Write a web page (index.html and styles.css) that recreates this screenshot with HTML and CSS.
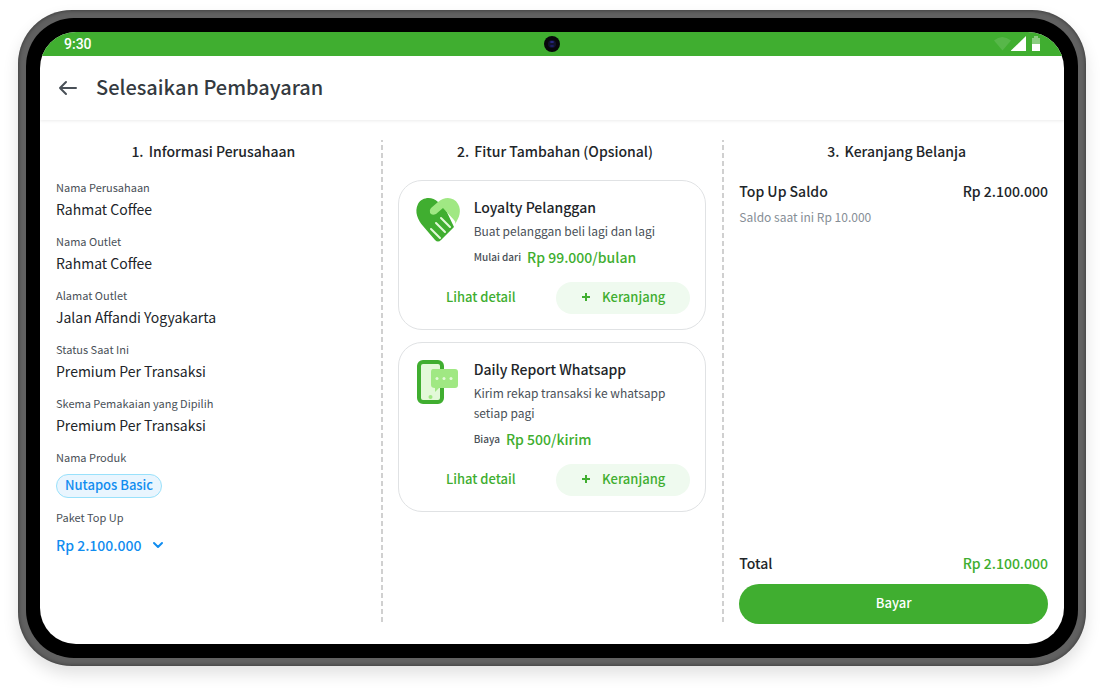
FILE: index.html
```html
<!DOCTYPE html>
<html lang="id">
<head>
    <meta charset="UTF-8">
    <meta name="viewport" content="width=device-width, initial-scale=1.0">
    <title>Selesaikan Pembayaran</title>
    <link rel="stylesheet" href="styles.css">
</head>
<body>

<div class="tablet">
    <div class="bezel">
        <div class="screen">
            <div class="status-bar">
                <span class="time">9:30</span>
                <svg class="status-icons" width="48" height="16" viewBox="0 0 48 16">
                    <path d="M0 4.500Q8 -2.500 17 4.500L8.500 14.500Z" fill="#fff" opacity=".12"/>
                    <path d="M17 15V14.500L32 0V15Z" fill="#fff"/>
                    <path d="M38 2h2V0h4v2h2v6h-8Z" fill="#fff" opacity=".4"/>
                    <path d="M38 8h8v7h-8Z" fill="#fff"/>
                </svg>
                <svg class="camera" width="16" height="16" viewBox="0 0 16 16">
                    <circle cx="8" cy="8" r="8" fill="#07070b"/>
                    <circle cx="8" cy="8" r="4" fill="#12122c"/>
                    <ellipse cx="8" cy="6" rx="2" ry="1" fill="#29298a"/>
                    <ellipse cx="8" cy="10" rx="2" ry="1" fill="#1e1e66"/>
                </svg>
            </div>

            <header class="header">
                <button class="back" aria-label="Kembali">
                    <svg width="20" height="16" viewBox="0 0 20 16" fill="none" stroke="#495057" stroke-width="2" stroke-linecap="round" stroke-linejoin="round">
                        <path d="M18 8H2M8 2L2 8L8 14"/>
                    </svg>
                </button>
                <h1>Selesaikan Pembayaran</h1>
            </header>

            <main class="columns">
                <section class="column">
                    <h2><span>1.</span> Informasi Perusahaan</h2>
                    <dl class="info">
                        <div>
                            <dt>Nama Perusahaan</dt>
                            <dd>Rahmat Coffee</dd>
                        </div>
                        <div>
                            <dt>Nama Outlet</dt>
                            <dd>Rahmat Coffee</dd>
                        </div>
                        <div>
                            <dt>Alamat Outlet</dt>
                            <dd>Jalan Affandi Yogyakarta</dd>
                        </div>
                        <div>
                            <dt>Status Saat Ini</dt>
                            <dd>Premium Per Transaksi</dd>
                        </div>
                        <div>
                            <dt>Skema Pemakaian yang Dipilih</dt>
                            <dd>Premium Per Transaksi</dd>
                        </div>
                        <div>
                            <dt>Nama Produk</dt>
                            <dd class="badge-row"><span class="badge">Nutapos Basic</span></dd>
                        </div>
                        <div>
                            <dt><label for="paket">Paket Top Up</label></dt>
                            <dd class="select">
                                <select id="paket">
                                    <option>Rp 2.100.000</option>
                                </select>
                                <svg width="12" height="8" viewBox="0 0 12 8" fill="none" stroke-width="2" stroke-linecap="round" stroke-linejoin="round">
                                    <path d="M2 2L6 6L10 2"/>
                                </svg>
                            </dd>
                        </div>
                    </dl>
                </section>

                <section class="column">
                    <h2><span>2.</span> Fitur Tambahan (Opsional)</h2>
                    <article class="card">
                        <div class="card-body">
                            <svg class="card-icon" width="48" height="48" viewBox="0 0 48 48">
                                <path d="M24 6C18 0 8 1 4 8C0 16 4 24 9 30L21 44Q24 47 27 44L40 31L30 10Z" fill="#40ae30"/>
                                <path d="M24 6C31 0 40 1 44 8C48 15 45 22 41 28Q42 26 40 24L29 12L22 18Q18 20 16 17Q15 14 17 12Z" fill="#a0e883"/>
                                <path d="M27 22L36 31M22 27L31 36M17 33L26 42" stroke="#e3f9d9" stroke-width="2" stroke-linecap="round"/>
                            </svg>
                            <div class="card-text">
                                <h3>Loyalty Pelanggan</h3>
                                <p>Buat pelanggan beli lagi dan lagi</p>
                                <div class="price"><small>Mulai dari</small> <strong>Rp 99.000/bulan</strong></div>
                            </div>
                        </div>
                        <div class="actions">
                            <button class="detail">Lihat detail</button>
                            <button class="add"><svg width="10" height="10" viewBox="0 0 10 10" stroke="#40ae30" stroke-width="2"><path d="M5 1V9M1 5H9"/></svg> Keranjang</button>
                        </div>
                    </article>
                    <article class="card">
                        <div class="card-body">
                            <svg class="card-icon" width="48" height="48" viewBox="0 0 48 48">
                                <rect x="5" y="4" width="23" height="40" rx="4" fill="#e3f9d9" stroke="#40ae30" stroke-width="4"/>
                                <path d="M19 11H41Q44 11 44 14V27Q44 30 41 30H25L21 34V30Q17 30 17 27V14Q17 11 19 11Z" fill="#a0e883"/>
                                <circle cx="16.500" cy="39" r="2" fill="#a0e883"/>
                                <g fill="#e3f9d9"><circle cx="23" cy="20.500" r="1.500"/><circle cx="30" cy="20.500" r="1.500"/><circle cx="37" cy="20.500" r="1.500"/></g>
                            </svg>
                            <div class="card-text">
                                <h3>Daily Report Whatsapp</h3>
                                <p>Kirim rekap transaksi ke whatsapp setiap pagi</p>
                                <div class="price"><small>Biaya</small> <strong>Rp 500/kirim</strong></div>
                            </div>
                        </div>
                        <div class="actions">
                            <button class="detail">Lihat detail</button>
                            <button class="add"><svg width="10" height="10" viewBox="0 0 10 10" stroke="#40ae30" stroke-width="2"><path d="M5 1V9M1 5H9"/></svg> Keranjang</button>
                        </div>
                    </article>
                </section>

                <section class="column">
                    <h2><span>3.</span> Keranjang Belanja</h2>
                    <div class="line item"><span>Top Up Saldo</span><span>Rp 2.100.000</span></div>
                    <p class="note">Saldo saat ini Rp 10.000</p>
                    <div class="line total"><span>Total</span><span class="amount">Rp 2.100.000</span></div>
                    <button class="pay">Bayar</button>
                </section>
            </main>
        </div>
    </div>
</div>

</body>
</html>
```
FILE: styles.css
```css
* {
    box-sizing: border-box;
}

body {
    margin: 0;
    padding: 10px 18px 26px;
    min-height: 100vh;
    display: flex;
    background: #fff;
    color: #212529;
    font-family: "Noto Sans CJK SC", sans-serif;
    font-size: 14px;
    line-height: 20px;
}

h1, h2, h3, p, dl, dd {
    margin: 0;
}

h1, h2, h3, strong {
    font-weight: 500;
}

button, select {
    border: 0;
    padding: 0;
    background: none;
    font: inherit;
    cursor: pointer;
}

/* device frame */
.tablet {
    flex: 1;
    display: flex;
    padding: 8px;
    border-radius: 54px;
    background: #616161;
    box-shadow: 0 8px 16px rgba(0, 0, 0, .12), inset 0 0 4px rgba(0, 0, 0, .5);
}

.bezel {
    flex: 1;
    display: flex;
    padding: 14px;
    border-radius: 48px;
    background: #000;
}

.screen {
    flex: 1;
    display: flex;
    flex-direction: column;
    overflow: hidden;
    border-radius: 36px;
    background: #fff;
}

.status-bar {
    position: relative;
    display: flex;
    align-items: center;
    justify-content: space-between;
    height: 24px;
    padding: 0 22px 0 24px;
    background: #40ae30;
    color: #fff;
}

.time {
    font-family: Roboto, sans-serif;
    font-weight: 500;
}

.camera {
    position: absolute;
    top: 4px;
    left: calc(50% - 8px);
}

.header {
    display: flex;
    align-items: center;
    gap: 18px;
    height: 64px;
    padding: 0 18px;
    box-shadow: 0 1px 3px rgba(0, 0, 0, .08);
}

.back {
    display: flex;
}

h1 {
    padding-bottom: 2px;
    font-size: 20px;
    line-height: 28px;
    color: #343a40;
}

.columns {
    flex: 1;
    display: grid;
    grid-template-columns: repeat(3, 1fr);
    gap: 1px;
    padding: 20px 0;
}

.column {
    position: relative;
    display: flex;
    flex-direction: column;
    padding: 0 16px;
}

/* dashed divider */
.column + .column::before {
    content: "";
    position: absolute;
    top: 0;
    bottom: 0;
    left: -1px;
    width: 2px;
    background: repeating-linear-gradient(#d0d0d0 0 2px, transparent 2px 5px, #d0d0d0 5px 8px);
}

h2 {
    padding-left: 6px;
    font-size: 14px;
    line-height: 22px;
    text-align: center;
}

h2 span {
    margin-right: 2px;
}

/* company info */
.info {
    display: flex;
    flex-direction: column;
    gap: 12px;
    padding-top: 18px;
}

dt {
    font-size: 11px;
    line-height: 14px;
    color: #495057;
}

dd {
    padding: 4px 0 2px;
    line-height: 22px;
}

.badge-row {
    display: flex;
    padding: 10px 0 0;
}

.badge {
    padding: 0 8px 2px;
    border: 1px solid #99e1fb;
    border-radius: 12px;
    background: #e9f5fe;
    color: #118df0;
    font-size: 13px;
    font-weight: 500;
    line-height: 20px;
}

.select {
    display: flex;
    align-items: center;
    gap: 10px;
    padding-top: 10px;
}

.select select {
    appearance: none;
    color: #118df0;
    font-weight: 500;
}

.select svg {
    stroke: #118df0;
    pointer-events: none;
}

/* feature cards */
.card {
    margin-top: 12px;
    padding: 15px;
    border: 1px solid #e0e2e4;
    border-radius: 24px;
}

h2 + .card {
    margin-top: 18px;
}

.card-body {
    display: flex;
    gap: 12px;
}

.card-icon {
    flex: none;
}

h3 {
    font-size: 14px;
    line-height: 22px;
}

.card p {
    padding-top: 3px;
    font-size: 12px;
    color: #495057;
}

.card-text {
    flex: 1;
}

.price {
    display: flex;
    align-items: center;
    gap: 6px;
    padding-top: 4px;
    line-height: 24px;
}

.price small {
    font-size: 10px;
    font-weight: 500;
    color: #495057;
}

.price strong {
    color: #40ae30;
}

.actions {
    display: grid;
    grid-template-columns: 1fr 1fr;
    gap: 8px;
    padding-top: 13px;
}

.actions button {
    height: 32px;
    padding-bottom: 2px;
    border-radius: 16px;
    color: #40ae30;
    font-size: 13px;
    font-weight: 500;
}

.actions .add {
    display: flex;
    align-items: center;
    justify-content: center;
    gap: 11px;
    background: #effaef;
}

/* cart */
.line {
    display: flex;
    justify-content: space-between;
    font-weight: 500;
    line-height: 22px;
}

.item {
    padding-top: 18px;
}

.note {
    padding-top: 5px;
    font-size: 12px;
    color: #868e96;
}

.total {
    margin-top: auto;
}

.amount {
    color: #40ae30;
}

.pay {
    height: 40px;
    margin-top: 10px;
    padding-bottom: 2px;
    border-radius: 20px;
    background: #40ae30;
    color: #fff;
    font-size: 13px;
    font-weight: 500;
}
```
